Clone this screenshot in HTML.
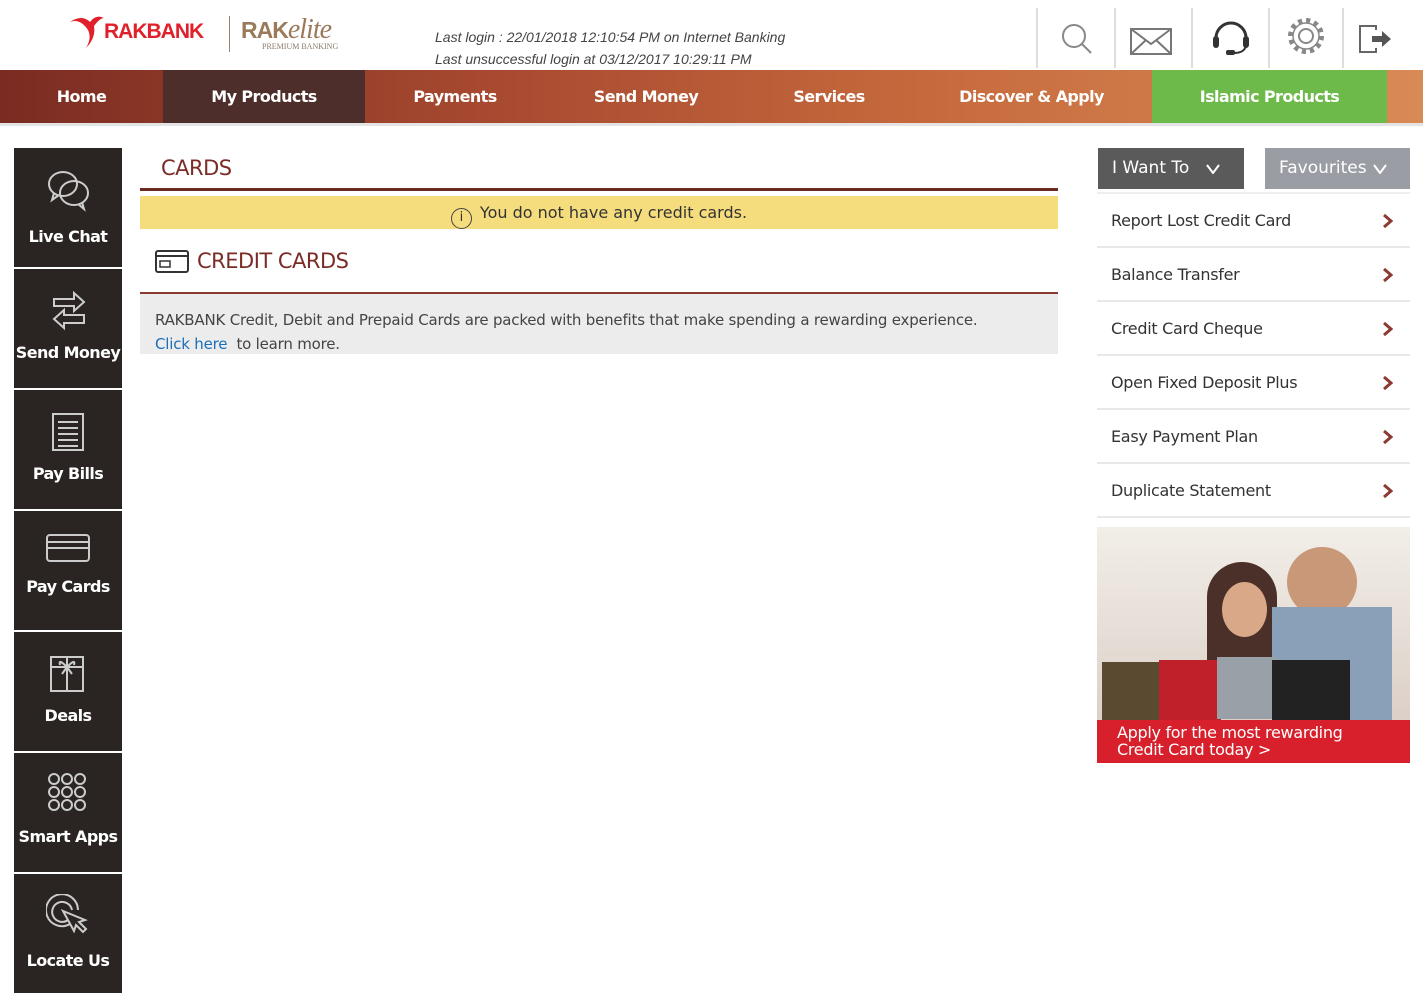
<!DOCTYPE html>
<html><head><meta charset="utf-8"><style>
*{margin:0;padding:0;box-sizing:border-box}
body{width:1423px;height:1000px;position:relative;background:#fff;font-family:"DejaVu Sans","Liberation Sans",sans-serif;overflow:hidden}
.a{position:absolute}
.nav{left:0;top:70px;width:1423px;height:56px;background:linear-gradient(90deg,#7a2c22 0%,#a84a30 35%,#c66a3d 65%,#d88a55 100%);border-bottom:3px solid #e4e4e4}
.nav div{position:absolute;top:0;height:53px;line-height:53px;text-align:center;color:#fff;font-weight:bold;font-size:16px;letter-spacing:-0.6px}
.tile{left:14px;width:108px;height:119px;background:#2a2422;color:#fff;font-weight:bold;font-size:16px;text-align:center;letter-spacing:-0.6px}
.tile svg{position:absolute;left:32px;top:20px}
.tile span{position:absolute;left:0;right:0;top:78px}
.li{left:1097px;width:313px;height:54px;border-bottom:2px solid #e8e8e8;font-size:16px;color:#333;line-height:54px;padding-left:14px;letter-spacing:-0.3px}
.li svg{position:absolute;right:17px;top:20px}
.ic{top:8px;height:60px;border-left:2px solid #ddd}
</style></head><body>
<div class="a" style="left:66px;top:14px"><svg width="40" height="36"><path d="M4 8 Q14 4 22 16 Q26 24 20 34 Q30 24 28 12 Q34 4 38 4 Q30 0 24 8 Q16 0 4 8Z" fill="#e0202a"/></svg></div>
<div class="a" style="left:104px;top:20px;font-family:'Liberation Sans';font-weight:bold;font-size:21px;color:#e0202a;letter-spacing:-1px">RAKBANK</div>
<div class="a" style="left:229px;top:16px;width:1px;height:36px;background:#a08070"></div>
<div class="a" style="left:241px;top:14px;font-family:'Liberation Sans';font-weight:bold;font-size:23px;color:#9a7a5a;letter-spacing:-1px">RAK<i style="font-family:'Liberation Serif';font-weight:normal;font-size:28px">elite</i></div>
<div class="a" style="left:262px;top:42px;font-family:'Liberation Serif';font-size:8px;color:#8a7a6a">PREMIUM BANKING</div>
<div class="a" style="left:435px;top:26px;font-family:'Liberation Sans';font-style:italic;font-size:14px;color:#444;line-height:22px">Last login : 22/01/2018 12:10:54 PM on Internet Banking<br>Last unsuccessful login at 03/12/2017 10:29:11 PM</div>
<div class="a ic" style="left:1036px"></div><div class="a ic" style="left:1114px"></div><div class="a ic" style="left:1191px"></div><div class="a ic" style="left:1268px"></div><div class="a ic" style="left:1342px"></div>
<svg class="a" style="left:1060px;top:22px" width="34" height="34"><circle cx="14" cy="14" r="11" fill="none" stroke="#888" stroke-width="2"/><path d="M22 22L31 31" stroke="#888" stroke-width="2"/></svg>
<svg class="a" style="left:1130px;top:28px" width="44" height="28"><rect x="1" y="1" width="40" height="25" fill="none" stroke="#777" stroke-width="2"/><path d="M1 1L21 16L41 1M1 26L16 12M41 26L26 12" fill="none" stroke="#777" stroke-width="2"/></svg>
<svg class="a" style="left:1210px;top:16px" width="42" height="40"><path d="M6 22 A15 15 0 0 1 36 22" fill="none" stroke="#333" stroke-width="3"/><rect x="3" y="20" width="6" height="12" rx="3" fill="#333"/><rect x="33" y="20" width="6" height="12" rx="3" fill="#333"/><path d="M36 30 Q34 37 24 37" fill="none" stroke="#333" stroke-width="2"/><rect x="16" y="34" width="9" height="5" rx="2" fill="#333"/></svg>
<svg class="a" style="left:1286px;top:16px" width="40" height="40"><circle cx="20" cy="20" r="15" fill="none" stroke="#888" stroke-width="6" stroke-dasharray="4 3.85"/><circle cx="20" cy="20" r="13" fill="#fff" stroke="#888" stroke-width="1.5"/><circle cx="20" cy="20" r="7" fill="none" stroke="#888" stroke-width="2"/></svg>
<svg class="a" style="left:1358px;top:24px" width="38" height="30"><path d="M18 6V2H2V28H18V24" fill="none" stroke="#666" stroke-width="2"/><path d="M14 12H24V7L33 15L24 23V18H14Z" fill="#555"/></svg>
<div class="a nav">
<div style="left:0;width:163px">Home</div>
<div style="left:163px;width:202px;background:#4e2e2a">My Products</div>
<div style="left:365px;width:180px">Payments</div>
<div style="left:545px;width:202px">Send Money</div>
<div style="left:747px;width:164px">Services</div>
<div style="left:911px;width:241px">Discover &amp; Apply</div>
<div style="left:1152px;width:235px;background:#6dba4a">Islamic Products</div>
</div>
<div class="a tile" style="top:148px"><svg width="46" height="46" fill="none" stroke="#ccc" stroke-width="2"><ellipse cx="17" cy="16" rx="14" ry="12"/><path d="M8 25L6 32L13 27"/><ellipse cx="28" cy="25" rx="14" ry="12"/><path d="M36 34L38 41L32 36"/></svg><span style="top:79px">Live Chat</span></div>
<div class="a tile" style="top:269px"><svg width="46" height="46" fill="none" stroke="#ccc" stroke-width="2"><path d="M8 10H28V4L38 13L28 22V17H8Z"/><path d="M38 26H18V21L8 30L18 39V34H38Z"/></svg><span style="top:74px">Send Money</span></div>
<div class="a tile" style="top:390px"><svg width="46" height="46" fill="none" stroke="#ccc" stroke-width="2"><rect x="7" y="4" width="30" height="36"/><path d="M12 12H32M12 18H32M12 24H32M12 30H32M12 36H32"/></svg><span style="top:74px">Pay Bills</span></div>
<div class="a tile" style="top:511px"><svg width="46" height="46" fill="none" stroke="#ccc" stroke-width="2"><rect x="1" y="4" width="42" height="26" rx="3"/><path d="M1 11H43M1 17H43"/></svg><span style="top:66px">Pay Cards</span></div>
<div class="a tile" style="top:632px"><svg width="46" height="46" fill="none" stroke="#ccc" stroke-width="2"><rect x="5" y="5" width="32" height="34"/><path d="M5 15H37M21 5V39M21 15Q12 6 14 13M21 15Q30 6 28 13M21 15L16 22M21 15L26 22"/></svg><span style="top:74px">Deals</span></div>
<div class="a tile" style="top:753px"><svg width="46" height="46" fill="none" stroke="#ccc" stroke-width="2"><circle cx="8" cy="6" r="5"/><circle cx="21" cy="6" r="5"/><circle cx="34" cy="6" r="5"/><circle cx="8" cy="19" r="5"/><circle cx="21" cy="19" r="5"/><circle cx="34" cy="19" r="5"/><circle cx="8" cy="32" r="5"/><circle cx="21" cy="32" r="5"/><circle cx="34" cy="32" r="5"/></svg><span style="top:74px">Smart Apps</span></div>
<div class="a tile" style="top:874px"><svg width="46" height="46" fill="none" stroke="#ccc" stroke-width="2"><path d="M24 30A16 16 0 1 1 32 16"/><path d="M22 26A10 10 0 1 1 26 16"/><path d="M17 17L28 37L30 31L37 38L40 35L33 28L39 26Z"/></svg><span style="top:77px">Locate Us</span></div>
<div class="a" style="left:161px;top:156px;font-size:21px;color:#7a2c26;letter-spacing:-0.5px">CARDS</div>
<div class="a" style="left:140px;top:188px;width:918px;height:3px;background:#6a2a22"></div>
<div class="a" style="left:140px;top:196px;width:918px;height:33px;background:#f5dd7e;text-align:center;line-height:33px;font-size:16px;color:#333"><span style="display:inline-block;width:21px;height:21px;border:1.5px solid #444;border-radius:50%;line-height:18px;font-size:13px;vertical-align:-3px;margin-right:8px">i</span>You do not have any credit cards.</div>
<svg class="a" style="left:155px;top:250px" width="34" height="23"><rect x="1" y="1" width="32" height="21" rx="2" fill="none" stroke="#333" stroke-width="2"/><path d="M1 6H33" stroke="#333" stroke-width="2"/><rect x="5" y="11" width="10" height="6" fill="none" stroke="#333" stroke-width="1.5"/></svg>
<div class="a" style="left:197px;top:249px;font-size:21px;color:#7a2c26;letter-spacing:-0.5px">CREDIT CARDS</div>
<div class="a" style="left:140px;top:292px;width:918px;height:2px;background:#8a3a32"></div>
<div class="a" style="left:140px;top:294px;width:918px;height:60px;background:#ececec;padding:14px 15px;font-size:15px;color:#444;line-height:24px;letter-spacing:-0.2px">RAKBANK Credit, Debit and Prepaid Cards are packed with benefits that make spending a rewarding experience.<br><span style="color:#1a6fb8">Click here</span>&nbsp; to learn more.</div>
<div class="a" style="left:1098px;top:148px;width:146px;height:41px;background:#5a5a5a;color:#fff;font-size:17px;line-height:41px;padding-left:14px">I Want To <svg style="position:absolute;left:108px;top:16px" width="14" height="10"><path d="M1 1L7 9L13 1" fill="none" stroke="#fff" stroke-width="2"/></svg></div>
<div class="a" style="left:1265px;top:148px;width:145px;height:41px;background:#9a9ea4;color:#fff;font-size:17px;line-height:41px;padding-left:14px">Favourites <svg style="position:absolute;left:108px;top:16px" width="14" height="10"><path d="M1 1L7 9L13 1" fill="none" stroke="#fff" stroke-width="2"/></svg></div>
<div class="a" style="left:1097px;top:192px;width:313px;height:2px;background:#eee"></div>
<div class="a li" style="top:194px">Report Lost Credit Card<svg width="10" height="14"><path d="M1 1L8 7L1 13" fill="none" stroke="#8a3a30" stroke-width="3"/></svg></div>
<div class="a li" style="top:248px">Balance Transfer<svg width="10" height="14"><path d="M1 1L8 7L1 13" fill="none" stroke="#8a3a30" stroke-width="3"/></svg></div>
<div class="a li" style="top:302px">Credit Card Cheque<svg width="10" height="14"><path d="M1 1L8 7L1 13" fill="none" stroke="#8a3a30" stroke-width="3"/></svg></div>
<div class="a li" style="top:356px">Open Fixed Deposit Plus<svg width="10" height="14"><path d="M1 1L8 7L1 13" fill="none" stroke="#8a3a30" stroke-width="3"/></svg></div>
<div class="a li" style="top:410px">Easy Payment Plan<svg width="10" height="14"><path d="M1 1L8 7L1 13" fill="none" stroke="#8a3a30" stroke-width="3"/></svg></div>
<div class="a li" style="top:464px">Duplicate Statement<svg width="10" height="14"><path d="M1 1L8 7L1 13" fill="none" stroke="#8a3a30" stroke-width="3"/></svg></div>
<div class="a" style="left:1097px;top:527px;width:313px;height:236px;background:linear-gradient(180deg,#f2eee8 0%,#e4dcd4 50%,#d8c8c0 100%);overflow:hidden">
<div class="a" style="left:110px;top:35px;width:70px;height:110px;border-radius:35px 35px 10px 10px;background:#4a3028"></div>
<div class="a" style="left:190px;top:20px;width:70px;height:70px;border-radius:50%;background:#c89878"></div>
<div class="a" style="left:175px;top:80px;width:120px;height:120px;background:#8aa0b8"></div>
<div class="a" style="left:125px;top:55px;width:45px;height:55px;border-radius:50%;background:#d8a888"></div>
<div class="a" style="left:5px;top:135px;width:60px;height:60px;background:#5a4a30"></div>
<div class="a" style="left:62px;top:133px;width:62px;height:60px;background:#c0202a"></div>
<div class="a" style="left:120px;top:130px;width:60px;height:62px;background:#9aa0a8"></div>
<div class="a" style="left:175px;top:133px;width:78px;height:60px;background:#222"></div>
<div class="a" style="left:0;top:193px;width:313px;height:43px;background:#d8202c;color:#fff;font-size:16px;line-height:17px;padding:4px 20px;letter-spacing:-0.3px">Apply for the most rewarding<br>Credit Card today &gt;</div>
</div>
</body></html>
